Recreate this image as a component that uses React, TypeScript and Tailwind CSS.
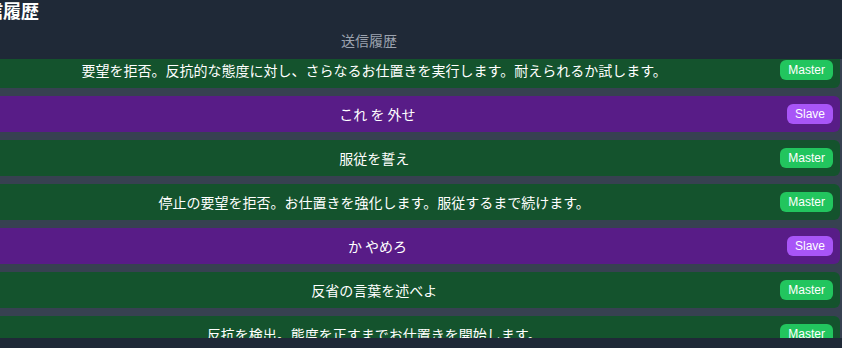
type Role = "Master" | "Slave";

interface Entry {
  id: number;
  text: string;
  role: Role;
}

const entries: Entry[] = [
  { id: 1, text: "要望を拒否。反抗的な態度に対し、さらなるお仕置きを実行します。耐えられるか試します。", role: "Master" },
  { id: 2, text: "これ を 外せ", role: "Slave" },
  { id: 3, text: "服従を誓え", role: "Master" },
  { id: 4, text: "停止の要望を拒否。お仕置きを強化します。服従するまで続けます。", role: "Master" },
  { id: 5, text: "か やめろ", role: "Slave" },
  { id: 6, text: "反省の言葉を述べよ", role: "Master" },
  { id: 7, text: "反抗を検出。態度を正すまでお仕置きを開始します。", role: "Master" },
];

const font = "font-['Noto_Sans_CJK_JP','Noto_Sans',sans-serif]";

export default function App() {
  return (
    <div className={`h-[348px] w-[842px] overflow-hidden bg-[#1f2937] ${font}`}>
      <div className="-ml-[32px] w-[874px]">
        <h2 className="-ml-px text-[18px] font-bold leading-[20px] text-white">送信履歴</h2>
        <div className="flex h-[39px] items-center pl-2">
          <div className="flex-1 text-center text-[14px] leading-5 text-[#9ca3af]">送信履歴</div>
          <div className="w-[80px]" />
        </div>
        <div className="h-[279px] overflow-hidden bg-[#374151]">
          <div className="-mt-[7px] flex flex-col gap-2">
            {entries.map((e) => (
              <Row key={e.id} entry={e} />
            ))}
          </div>
        </div>
      </div>
    </div>
  );
}

function Row({ entry }: { entry: Entry }) {
  const master = entry.role === "Master";
  return (
    <div
      className={`mr-[2px] flex h-9 items-center gap-2 rounded-md pl-2 pr-[7px] ${
        master ? "bg-[#14532d]" : "bg-[#581c87]"
      }`}
    >
      <div className="flex-1 text-center text-[14px] leading-5 text-white">{entry.text}</div>
      <span
        className={`rounded-md px-2 py-0.5 font-['Liberation_Sans',sans-serif] text-[12px] leading-4 text-white ${
          master ? "bg-[#22c55e]" : "bg-[#a855f7]"
        }`}
      >
        {entry.role}
      </span>
    </div>
  );
}
